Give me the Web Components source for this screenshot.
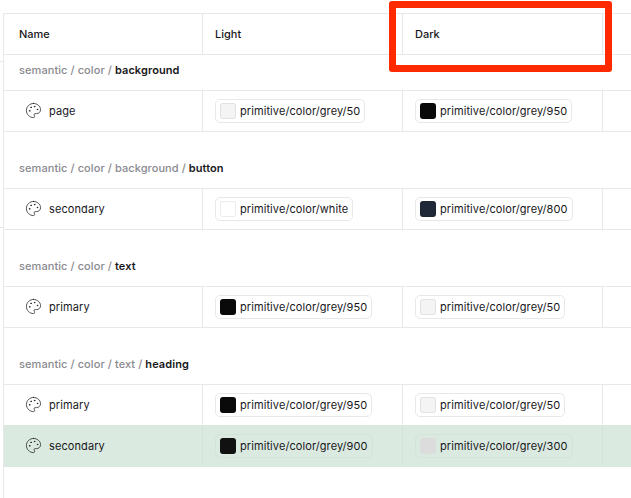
<!DOCTYPE html>
<html>
<head>
<meta charset="utf-8">
<style>
  html, body { margin: 0; padding: 0; background: #fff; }
  body { width: 631px; height: 498px; overflow: hidden; position: relative; font-family: Inter, "Liberation Sans", sans-serif; }
  .mark { position: absolute; left: 389px; top: 1px; width: 209px; height: 57px; border: 7px solid #ff2a00; border-radius: 3px; pointer-events: none; }
  .tick { position: absolute; left: 0; width: 3px; height: 1px; background: #e8e8e8; }
</style>
</head>
<body>
<token-table>
  <head-row></head-row>
  <group-label path="semantic / color /" leaf="background"></group-label>
  <token-row name="page" light="primitive/color/grey/50" light-color="#f4f4f5" dark="primitive/color/grey/950" dark-color="#0a0a0a"></token-row>
  <group-label class="gap" path="semantic / color / background /" leaf="button"></group-label>
  <token-row name="secondary" light="primitive/color/white" light-color="#ffffff" dark="primitive/color/grey/800" dark-color="#1f2937"></token-row>
  <group-label class="gap" path="semantic / color /" leaf="text"></group-label>
  <token-row name="primary" light="primitive/color/grey/950" light-color="#0a0a0a" dark="primitive/color/grey/50" dark-color="#f4f4f5"></token-row>
  <group-label class="gap" path="semantic / color / text /" leaf="heading"></group-label>
  <token-row name="primary" light="primitive/color/grey/950" light-color="#0a0a0a" dark="primitive/color/grey/50" dark-color="#f4f4f5"></token-row>
  <token-row selected name="secondary" light="primitive/color/grey/900" light-color="#111111" dark="primitive/color/grey/300" dark-color="#dcdcdc"></token-row>
</token-table>
<div class="tick" style="top:61px"></div>
<div class="tick" style="top:227px"></div>
<div class="mark"></div>

<script>
const LINE = '#e8e8e8';

class TokenTable extends HTMLElement {
    constructor() {
        super();
        this.attachShadow({ mode: 'open' });
        this.shadowRoot.innerHTML = `
            <style>
                :host {
                    display: flex;
                    flex-direction: column;
                    margin: 13px 0 0 3px;
                    border-left: 1px solid ${LINE};
                    height: 485px;
                    color: #18181b;
                    font-size: 11px;
                }
            </style>
            <slot></slot>
        `;
    }
}

class HeadRow extends HTMLElement {
    constructor() {
        super();
        this.attachShadow({ mode: 'open' });
        this.shadowRoot.innerHTML = `
            <style>
                :host {
                    display: grid;
                    grid-template-columns: 199px 200px 200px 1fr;
                    height: 40px;
                    border-top: 1px solid ${LINE};
                    border-bottom: 1px solid ${LINE};
                    font-weight: 500;
                }
                div { display: flex; align-items: center; padding-left: 12px; border-right: 1px solid ${LINE}; }
                div:first-of-type { padding-left: 15px; }
                div:last-of-type { border-right: none; }
            </style>
            <div>Name</div><div>Light</div><div>Dark</div><div></div>
        `;
    }
}

class GroupLabel extends HTMLElement {
    constructor() {
        super();
        this.attachShadow({ mode: 'open' });
        this.shadowRoot.innerHTML = `
            <style>
                :host {
                    display: flex;
                    align-items: flex-end;
                    height: 35px;
                    padding-left: 15px;
                    border-bottom: 1px solid ${LINE};
                    color: #8a8a8f;
                    font-weight: 500;
                    letter-spacing: .08px;
                }
                :host(.gap) { height: 56px; }
                span { margin-bottom: 13px; }
                b { color: #18181b; font-weight: 600; }
            </style>
            <span>${this.getAttribute('path')} <b>${this.getAttribute('leaf')}</b></span>
        `;
    }
}

class TokenRow extends HTMLElement {
    constructor() {
        super();
        this.attachShadow({ mode: 'open' });
        this.shadowRoot.innerHTML = `
            <style>
                :host {
                    display: grid;
                    grid-template-columns: 199px 200px 200px 1fr;
                    height: 40px;
                    border-bottom: 1px solid ${LINE};
                }
                :host([selected]) { background: #dbeae1; border-bottom: none; height: 42px; margin-top: -1px; --cell-line: #d5e3da; --chip-line: #d5e3da; --swatch-line: transparent; }
                .cell { display: flex; align-items: center; padding-left: 12px; border-right: 1px solid var(--cell-line, ${LINE}); }
                .cell:last-child { border-right: none; }
                .name { padding-left: 21px; gap: 7px; letter-spacing: .1px; }
                svg { width: 17px; height: 17px; margin-top: -1px; fill: none; stroke: #18181b; stroke-width: 1.05; stroke-linecap: round; stroke-linejoin: round; flex: none; }
            </style>
            <div class="cell name">
                <svg viewBox="0 0 24 24">
                    <circle cx="13.5" cy="6.5" r=".5" fill="#18181b"/>
                    <circle cx="17.5" cy="10.5" r=".5" fill="#18181b"/>
                    <circle cx="8.5" cy="7.5" r=".5" fill="#18181b"/>
                    <circle cx="6.5" cy="12.5" r=".5" fill="#18181b"/>
                    <path d="M12 2C6.5 2 2 6.5 2 12s4.5 10 10 10c.926 0 1.648-.746 1.648-1.688 0-.437-.18-.835-.437-1.125-.29-.289-.438-.652-.438-1.125a1.64 1.64 0 0 1 1.668-1.668h1.996c3.051 0 5.555-2.503 5.555-5.554C21.965 6.012 17.461 2 12 2z"/>
                </svg>
                <span>${this.getAttribute('name')}</span>
            </div>
            <div class="cell"><color-chip color="${this.getAttribute('light-color')}">${this.getAttribute('light')}</color-chip></div>
            <div class="cell"><color-chip color="${this.getAttribute('dark-color')}">${this.getAttribute('dark')}</color-chip></div>
            <div class="cell"></div>
        `;
    }
}

class ColorChip extends HTMLElement {
    constructor() {
        super();
        this.attachShadow({ mode: 'open' });
        this.shadowRoot.innerHTML = `
            <style>
                :host {
                    display: inline-flex;
                    align-items: center;
                    gap: 4px;
                    height: 22px;
                    padding: 0 4px;
                    border: 1px solid var(--chip-line, ${LINE});
                    border-radius: 5px;
                    letter-spacing: .08px;
                }
                i { width: 16px; height: 16px; box-sizing: border-box; border-radius: 3px; border: 1px solid var(--swatch-line, rgba(0,0,0,.07)); background: ${this.getAttribute('color')}; }
            </style>
            <i></i><slot></slot>
        `;
    }
}

customElements.define('token-table', TokenTable);
customElements.define('head-row', HeadRow);
customElements.define('group-label', GroupLabel);
customElements.define('token-row', TokenRow);
customElements.define('color-chip', ColorChip);
</script>
</body>
</html>
